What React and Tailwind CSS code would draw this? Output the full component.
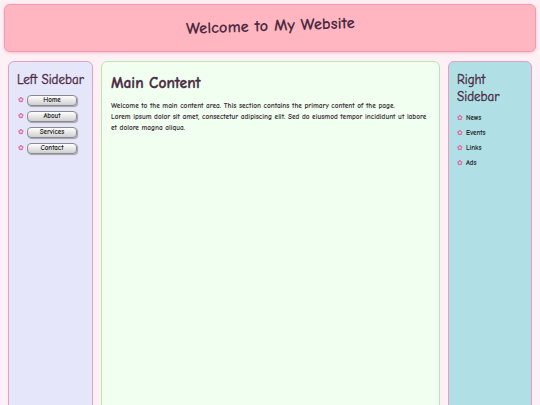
const font = { fontFamily: '"Comic Sans MS", "Comic Neue", cursive' }

const leftLinks = ['Home', 'About', 'Services', 'Contact']
const rightLinks = ['News', 'Events', 'Links', 'Ads']

export default function App() {
  return (
    <div className="h-[405px] overflow-hidden bg-[#fff0f5] text-[#4b2a42]" style={font}>
      <div className="p-1">
        <header className="h-[48px] flex items-center justify-center rounded-md border border-[#f29bb0] bg-[#ffb6c1] shadow-[0_1px_3px_rgba(200,100,130,0.35)]">
          <h1 className="text-[16.5px] font-bold -rotate-2 -mt-[4px]">Welcome to My Website</h1>
        </header>
      </div>

      <div className="flex gap-2 px-2 pt-[5px]">
        {/* Left */}
        <aside className="w-[85px] h-[400px] shrink-0 rounded-md border border-[#e89ec0] bg-[#e6e6fa] px-[8px] pt-[9px]">
          <h2 className="text-[13px] leading-[18px] whitespace-nowrap [-webkit-text-stroke:0.35px_#4b2a42]">Left Sidebar</h2>
          <ul className="mt-[6px] flex flex-col gap-[5px]">
            {leftLinks.map((l) => (
              <li key={l} className="flex items-center gap-[3px] pl-[1px]">
                <span className="text-[7px] leading-none text-[#e0609a]">✿</span>
                <button className="w-[50px] h-[11px] rounded-[4px] border border-[#8a8a8a] bg-gradient-to-b from-[#ffffff] to-[#cfcfcf] text-[7px] leading-none font-semibold shadow-[1px_1px_1px_rgba(0,0,0,0.3)] text-[#222]">
                  {l}
                </button>
              </li>
            ))}
          </ul>
        </aside>

        {/* Main */}
        <main className="flex-1 h-[400px] rounded-md border border-[#b8e6b0] bg-[#f0fff0] px-[9px] pt-[10px]">
          <h2 className="text-[15.5px] font-bold leading-[22px] [-webkit-text-stroke:0.3px_#4b2a42]">Main Content</h2>
          <p className="mt-[6px] text-[7.3px] leading-[11px] font-semibold text-[#3a2a35]">
            Welcome to the main content area. This section contains the primary content of the page.
            <br />
            Lorem ipsum dolor sit amet, consectetur adipiscing elit. Sed do eiusmod tempor incididunt ut labore et dolore magna aliqua.
          </p>
        </main>

        {/* Right */}
        <aside className="w-[84px] h-[400px] shrink-0 rounded-md border border-[#e89ec0] bg-[#b0e0e6] px-[8px] pt-[9px]">
          <h2 className="text-[13px] leading-[17px] [-webkit-text-stroke:0.35px_#4b2a42]">Right Sidebar</h2>
          <ul className="mt-[8px] flex flex-col gap-[4px]">
            {rightLinks.map((l) => (
              <li key={l} className="flex items-center gap-[3px] text-[7px] leading-[11px] font-semibold text-[#222]">
                <span className="text-[7px] leading-none font-normal text-[#e0609a]">✿</span>
                {l}
              </li>
            ))}
          </ul>
        </aside>
      </div>
    </div>
  )
}
